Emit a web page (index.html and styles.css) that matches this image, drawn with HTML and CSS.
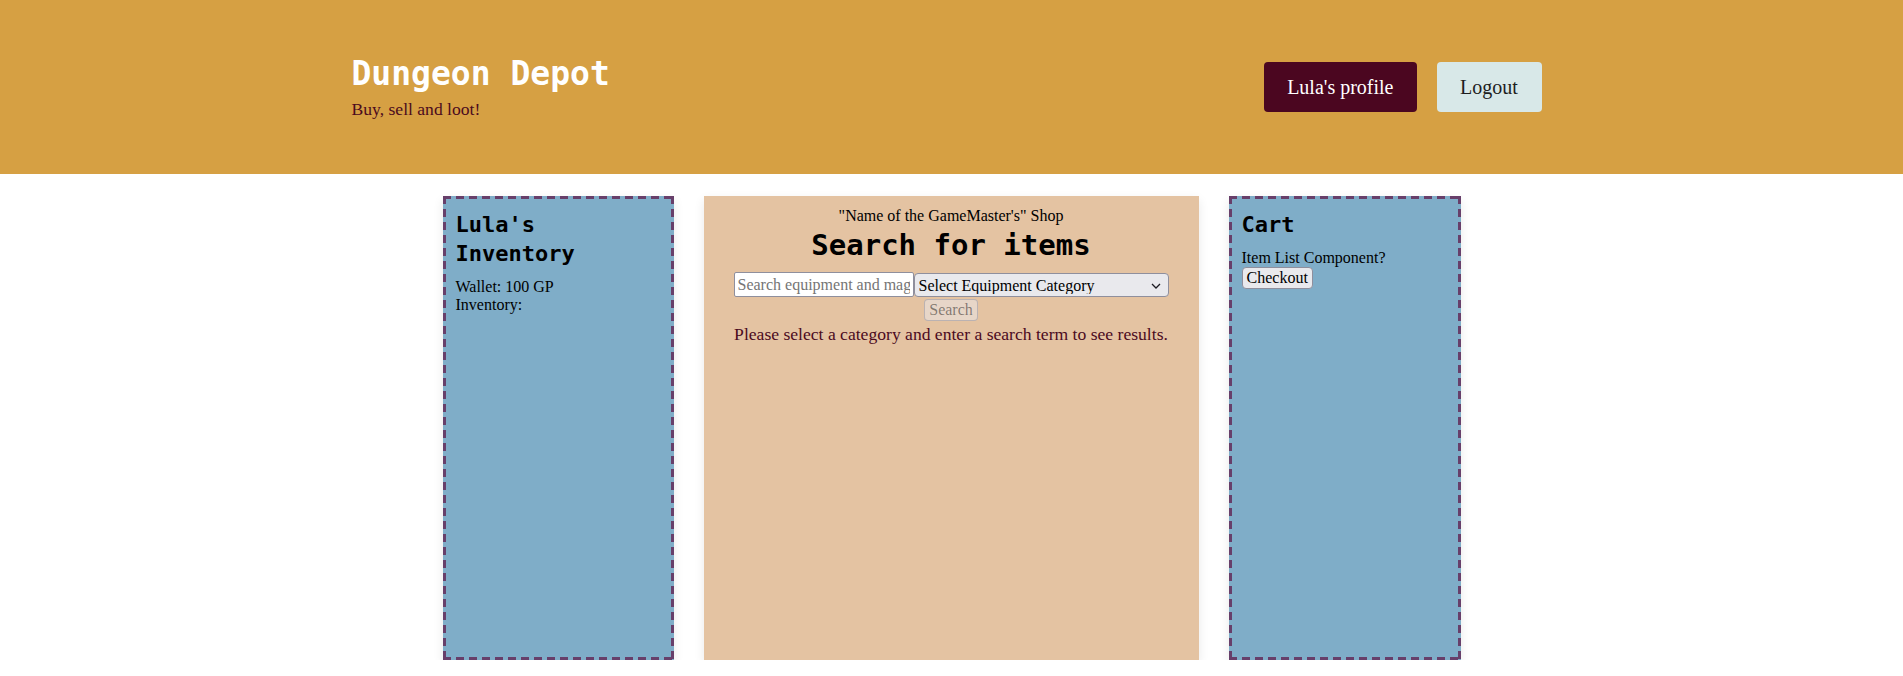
FILE: index.html
```html
<!DOCTYPE html>
<html lang="en">
<head>
<meta charset="utf-8">
<title>Dungeon Depot</title>
<link rel="stylesheet" href="styles.css">
</head>
<body>
<header class="site-header">
  <div class="header-inner">
    <div class="brand">
      <h1 class="brand-title">Dungeon Depot</h1>
      <p class="brand-tagline">Buy, sell and loot!</p>
    </div>
    <nav class="header-nav">
      <button class="btn btn-profile">Lula's profile</button>
      <button class="btn btn-logout">Logout</button>
    </nav>
  </div>
</header>
<main class="layout">
  <section class="panel side-panel">
    <h2 class="panel-title">Lula's Inventory</h2>
    <div class="panel-text">Wallet: 100 GP</div>
    <div class="panel-text">Inventory:</div>
  </section>
  <section class="panel shop-panel">
    <div class="shop-name">"Name of the GameMaster's" Shop</div>
    <h1 class="shop-title">Search for items</h1>
    <form class="search-form"><input class="search-input" type="text" placeholder="Search equipment and magic items"><span class="select-wrap"><select class="search-select"><option>Select Equipment Category</option></select><svg class="select-chevron" width="10" height="6" viewBox="0 0 10 6"><path d="M1 1l4 4 4-4" fill="none" stroke="#1c1b22" stroke-width="1.3"/></svg></span>
      <button class="search-btn" type="button" disabled>Search</button>
    </form>
    <p class="shop-message">Please select a category and enter a search term to see results.</p>
  </section>
  <section class="panel side-panel">
    <h2 class="panel-title">Cart</h2>
    <div class="panel-text">Item List Component?</div>
    <button class="checkout-btn">Checkout</button>
  </section>
</main>
</body>
</html>
```
FILE: styles.css
```css
* { box-sizing: border-box; }
html, body { margin: 0; padding: 0; background: #ffffff; }
body { font-family: "Liberation Serif", "Times New Roman", serif; font-size: 16px; color: #000; }

.site-header { background: #d6a043; height: 174px; display: flex; align-items: center; }
.header-inner { width: 1200px; margin: 0 auto; display: flex; align-items: center; justify-content: space-between; }
.brand-title { margin: 0; font-family: "DejaVu Sans Mono", monospace; font-weight: bold; font-size: 33px; line-height: 38px; color: #ffffff; }
.brand-tagline { margin: 6px 0 0; font-size: 17.6px; line-height: 20px; color: #4b0a1e; }
.header-nav { display: flex; align-items: center; }
.btn { font-family: "Liberation Serif", "Times New Roman", serif; font-size: 20px; line-height: 24px; height: 50px; padding: 0 23px; border: none; border-radius: 4px; margin: 0 10px; cursor: pointer; }
.btn-profile { background: #4b0620; color: #ffffff; }
.btn-logout { background: #d8e8e8; color: #1e1e1e; width: 105px; padding: 0; }

.layout { display: grid; grid-template-columns: 231px 495px 232px; column-gap: 30px; justify-content: center; margin-top: 22px; }
.panel { height: 464px; box-shadow: 0 4px 10px rgba(0,0,0,0.09); }
.side-panel {
  background-color: #7fadc8;
  border: 3px solid transparent;
  background-image:
    repeating-linear-gradient(90deg, #673f6a 0 8px, transparent 8px 13px),
    repeating-linear-gradient(90deg, #673f6a 0 8px, transparent 8px 13px),
    repeating-linear-gradient(180deg, #673f6a 0 8px, transparent 8px 13px),
    repeating-linear-gradient(180deg, #673f6a 0 8px, transparent 8px 13px);
  background-size: 100% 3px, 100% 3px, 3px 100%, 3px 100%;
  background-position: 0 0, 0 100%, 0 0, 100% 0;
  background-origin: border-box;
  background-clip: border-box;
  background-repeat: no-repeat;
  padding: 11px 10px;
}
.panel-title { margin: 0 0 10px; font-family: "DejaVu Sans Mono", monospace; font-weight: bold; font-size: 22px; line-height: 29px; }
.panel-text { line-height: 18.4px; }
.checkout-btn { font-family: "Liberation Serif", "Times New Roman", serif; font-size: 16px; line-height: 18px; padding: 1px 4px; background: #e9e9ed; border: 1px solid #8f8f9d; border-radius: 4px; color: #000; }

.shop-panel { background: #e4c3a2; padding: 11px 10px; text-align: center; }
.shop-name { line-height: 18px; }
.shop-title { margin: 2px 0 9px; font-family: "DejaVu Sans Mono", monospace; font-weight: bold; font-size: 29px; line-height: 36px; }
.search-form { margin: 0; line-height: 0; }
.search-input { width: 180px; height: 25px; vertical-align: top; font-family: "Liberation Serif", "Times New Roman", serif; font-size: 16px; padding: 1px 3px; border: 1px solid #8f8f9d; border-radius: 2px; background: #fff; margin: 0; }
.search-input::placeholder { color: #757575; }
.select-wrap { position: relative; display: inline-block; vertical-align: top; margin-top: 1px; }
.search-select { appearance: none; -webkit-appearance: none; width: 255px; height: 24px; font-family: "Liberation Serif", "Times New Roman", serif; font-size: 16px; color: #000; padding: 0 20px 0 4px; border: 1px solid #8f8f9d; border-radius: 4px; background: #e9e9ed; margin: 0; }
.select-chevron { position: absolute; right: 8px; top: 10px; pointer-events: none; }
.search-btn { display: inline-block; margin-top: 2px; font-family: "Liberation Serif", "Times New Roman", serif; font-size: 16px; line-height: 18px; padding: 1px 4px; background: rgba(233,233,237,0.5); border: 1px solid rgba(143,143,157,0.5); border-radius: 4px; color: rgba(0,0,0,0.45); }
.shop-message { margin: 3px 0 0; font-size: 17.6px; line-height: 20px; color: #4b0a1e; }
```
